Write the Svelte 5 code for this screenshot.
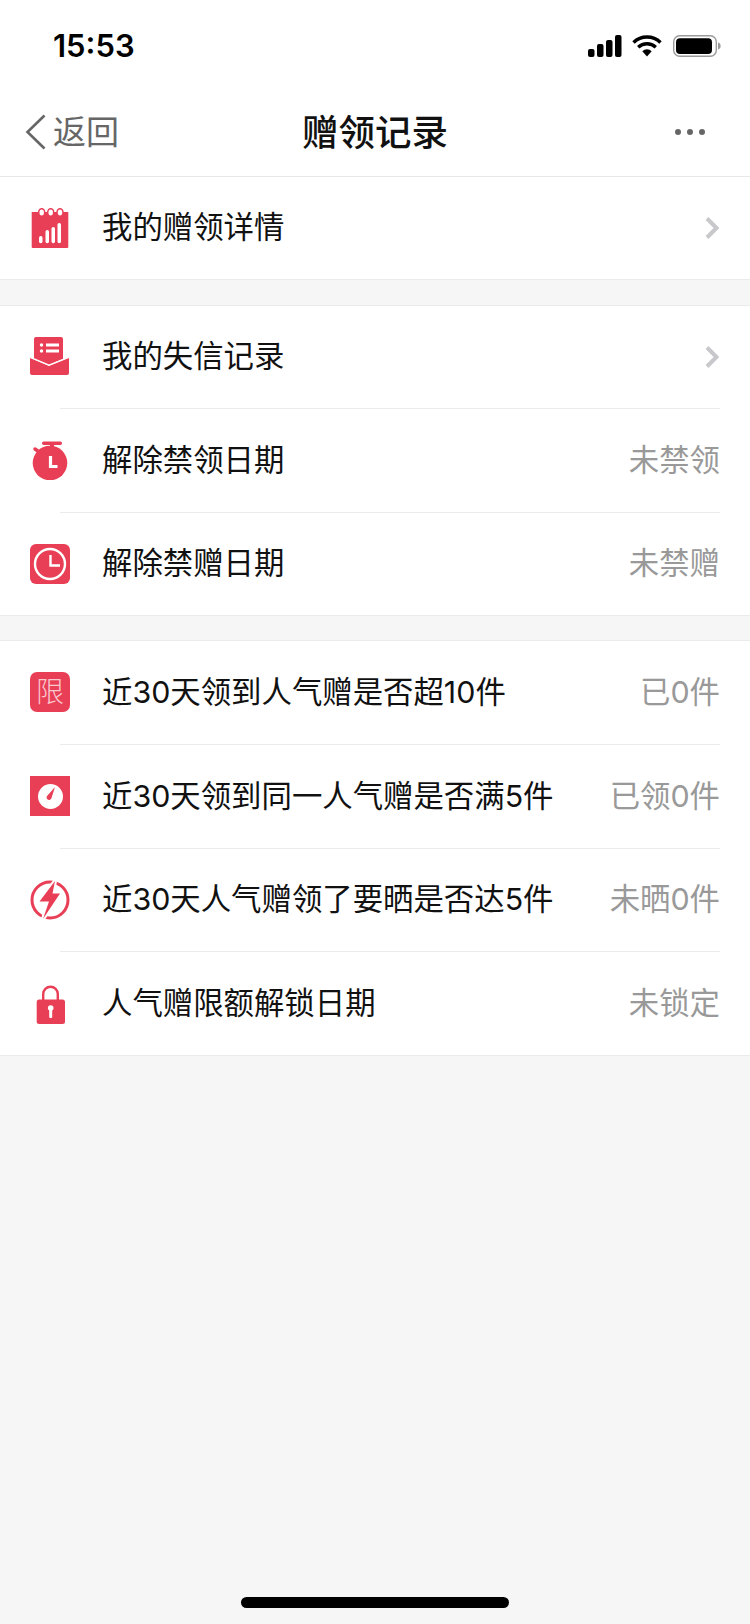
<script>
  const sections = [
    [{ icon: 'calendar', label: '我的赠领详情', arrow: true }],
    [
      { icon: 'inbox', label: '我的失信记录', arrow: true },
      { icon: 'timer', label: '解除禁领日期', value: '未禁领' },
      { icon: 'clock', label: '解除禁赠日期', value: '未禁赠' }
    ],
    [
      { icon: 'limit', label: '近30天领到人气赠是否超10件', value: '已0件' },
      { icon: 'gauge', label: '近30天领到同一人气赠是否满5件', value: '已领0件' },
      { icon: 'bolt', label: '近30天人气赠领了要晒是否达5件', value: '未晒0件' },
      { icon: 'lock', label: '人气赠限额解锁日期', value: '未锁定' }
    ]
  ];
</script>

{#snippet rowIcon(name)}
  <svg class="icon" viewBox="0 0 40 40" width="40" height="40" aria-hidden="true">
    {#if name === 'calendar'}
      <path d="M1.700 4h36.600v35a1 1 0 0 1-1 1H2.700a1 1 0 0 1-1-1z" fill="#e93f56" />
      <g fill="#fff" stroke="#e93f56" stroke-width="1.500">
        <ellipse cx="11.700" cy="4.500" rx="3" ry="3.800" />
        <ellipse cx="20.700" cy="4.500" rx="3" ry="3.800" />
        <ellipse cx="30" cy="4.500" rx="3" ry="3.800" />
      </g>
      <g fill="#fff">
        <rect x="9" y="28" width="3.500" height="7.300" rx="1.700" />
        <rect x="15.500" y="22" width="3.500" height="13.300" rx="1.700" />
        <rect x="21.500" y="19" width="3.500" height="16.300" rx="1.700" />
        <rect x="27.500" y="15" width="3.500" height="20.300" rx="1.700" />
      </g>
    {:else if name === 'inbox'}
      <path d="M4 2a2 2 0 0 1 2-2h25a2 2 0 0 1 2 2v20l-14 6-15-6z" fill="#e93f56" />
      <path d="M0 21l19 8 20-8v15a2 2 0 0 1-2 2H2a2 2 0 0 1-2-2z" fill="#e93f56" />
      <g fill="#fff">
        <circle cx="11.500" cy="8" r="1.700" /><circle cx="11.500" cy="14" r="1.700" />
        <rect x="16" y="6.500" width="13" height="3" /><rect x="16" y="12.500" width="13" height="3" />
      </g>
      <path d="M0 20l19 8 20-8" fill="none" stroke="#fff" stroke-width="1.200" />
    {:else if name === 'timer'}
      <circle cx="20" cy="23" r="17.300" fill="#e93f56" />
      <rect x="12" y="1.500" width="20" height="3.500" rx="1.700" fill="#e93f56" />
      <rect x="20" y="4" width="4" height="4" fill="#e93f56" />
      <path d="M5 9l5 3.500" stroke="#e93f56" stroke-width="3.500" stroke-linecap="round" />
      <path d="M20.500 16v10.500h7" fill="none" stroke="#fff" stroke-width="3.200" />
    {:else if name === 'clock'}
      <rect width="40" height="40" rx="6" fill="#e93f56" />
      <circle cx="20" cy="20" r="15" fill="none" stroke="#fff" stroke-width="2.400" />
      <path d="M20.500 11v10.500h9.500" fill="none" stroke="#fff" stroke-width="2.400" />
    {:else if name === 'limit'}
      <rect width="40" height="40" rx="7" fill="#e93f56" />
      <text x="20" y="30" class="limit-glyph">限</text>
    {:else if name === 'gauge'}
      <rect width="40" height="40" fill="#e93f56" />
      <circle cx="20.500" cy="20.500" r="12.500" fill="#fff" />
      <path d="M25 11l-3.500 11a2.500 2.500 0 1 1-4-2.500z" fill="#e93f56" />
    {:else if name === 'bolt'}
      <circle cx="20" cy="20" r="18" fill="none" stroke="#e93f56" stroke-width="3" />
      <path d="M25 1L9.500 21.500H19L13 39l17-25.500h-7.500z" fill="#e93f56" stroke="#fff" stroke-width="4" paint-order="stroke" />
    {:else if name === 'lock'}
      <path d="M13.200 17v-7a7.300 7.300 0 0 1 14.600 0v7" fill="none" stroke="#e93f56" stroke-width="2.400" />
      <rect x="6.700" y="15.500" width="28.300" height="24.500" rx="2.500" fill="#e93f56" />
      <circle cx="20.700" cy="24" r="2.800" fill="#fff" />
      <rect x="19.200" y="24" width="3" height="10" rx="1" fill="#fff" />
    {/if}
  </svg>
{/snippet}

<div class="page">
  <header class="status">
    <span class="time">15:53</span>
    <div class="status-icons">
      <svg width="34" height="22" viewBox="0 0 34 22" aria-hidden="true">
        <rect x="0" y="14" width="6.500" height="8" rx="2" />
        <rect x="9" y="9" width="6.500" height="13" rx="2" />
        <rect x="18" y="5" width="6.500" height="17" rx="2" />
        <rect x="27" y="0" width="6.500" height="22" rx="2" />
      </svg>
      <svg width="30" height="22" viewBox="0 0 30 22" aria-hidden="true">
        <path d="M1.500 7.500a19.500 19.500 0 0 1 27 0M6.200 12.200a13 13 0 0 1 17.600 0" fill="none" stroke="#000" stroke-width="3.400" />
        <path d="M10.300 16.200a6.800 6.800 0 0 1 9.400 0L15 21.500z" />
      </svg>
      <svg width="48" height="22" viewBox="0 0 48 22" aria-hidden="true">
        <rect x="0.700" y="0.700" width="42.600" height="20.600" rx="6" fill="none" stroke="#9a9a9a" stroke-width="1.400" />
        <rect x="3" y="3.300" width="36" height="15.700" rx="4" />
        <path d="M45 7.500c2 .6 2.600 1.900 2.600 3.500s-.6 2.900-2.600 3.500z" fill="#9a9a9a" />
      </svg>
    </div>
  </header>

  <nav class="nav">
    <div class="back">
      <svg width="22" height="36" viewBox="0 0 22 36" aria-hidden="true">
        <path d="M19.500 1.500L2.500 18l17 16.500" fill="none" stroke="#666" stroke-width="2.600" />
      </svg>
      <span>返回</span>
    </div>
    <h1>赠领记录</h1>
    <div class="more"><i></i><i></i><i></i></div>
  </nav>

  {#each sections as rows}
    <section class="group">
      {#each rows as row}
        <div class="row">
          {@render rowIcon(row.icon)}
          <span class="label">{row.label}</span>
          {#if row.arrow}
            <svg class="chevron" width="15" height="22" viewBox="0 0 15 22" aria-hidden="true">
              <path d="M2 1.500L11.500 11 2 20.500" fill="none" stroke="#c8c8cc" stroke-width="4" />
            </svg>
          {:else}
            <span class="value">{row.value}</span>
          {/if}
        </div>
      {/each}
    </section>
  {/each}

  <div class="home-bar"></div>
</div>

<style>
  :global(body) {
    margin: 0;
    background: #f6f6f6;
  }

  .page {
    position: relative;
    height: 1624px;
    overflow: hidden;
    background: #f6f6f6;
    color: #111;
    font-family: Inter, "Noto Sans CJK SC", "Liberation Sans", sans-serif;
  }

  .status {
    height: 88px;
    box-sizing: border-box;
    padding: 26px 29px 0 53px;
    display: flex;
    justify-content: space-between;
    align-items: flex-start;
    background: #fff;
  }

  .time {
    font-size: 31px;
    font-weight: 600;
    line-height: 40px;
    color: #000;
  }

  .status-icons {
    display: flex;
    gap: 10px;
    padding-top: 9px;
  }

  .status-icons svg {
    display: block;
  }

  .status-icons svg:last-child {
    margin-left: 1px;
  }

  .nav {
    height: 89px;
    box-sizing: border-box;
    padding: 0 45px 0 25px;
    display: flex;
    align-items: center;
    justify-content: space-between;
    position: relative;
    background: #fff;
    border-bottom: 1px solid #e8e8e8;
  }

  .back {
    display: flex;
    align-items: center;
    gap: 6px;
    font-size: 33px;
    color: #666;
  }

  .back svg {
    display: block;
  }

  .back span {
    padding-bottom: 4px;
  }

  h1 {
    position: absolute;
    left: 0;
    right: 0;
    margin: 0;
    padding-bottom: 4px;
    text-align: center;
    font-size: 36.5px;
    font-weight: 500;
    color: #111;
    pointer-events: none;
  }

  .more {
    display: flex;
    gap: 6px;
  }

  .more i {
    width: 6px;
    height: 6px;
    border-radius: 50%;
    background: #666;
  }

  .group {
    background: #fff;
    border-bottom: 1px solid #ebebeb;
    margin-bottom: 24px;
  }

  .group:first-of-type {
    margin-bottom: 25px;
  }

  .group + .group {
    border-top: 1px solid #ebebeb;
  }

  /* divider runs from x=60, so the icon hangs left of the row box */
  .row {
    height: 103.5px;
    box-sizing: border-box;
    margin: 0 30px 0 60px;
    display: flex;
    align-items: center;
    justify-content: space-between;
    font-size: 30.4px;
    border-bottom: 1px solid #ebebeb;
  }

  .row:last-child {
    border-bottom: 0;
    height: 102.5px;
  }

  .group:first-of-type .row {
    height: 101.5px;
  }

  .group:nth-of-type(3) .row {
    height: 103.75px;
  }

  .group:nth-of-type(3) .row:last-child {
    height: 102.75px;
  }

  .icon {
    flex: none;
    display: block;
    margin-left: -30px;
    margin-right: 32px;
  }

  .label {
    flex: 1;
    color: #111;
    white-space: nowrap;
    padding-bottom: 5px;
  }

  .value {
    color: #999;
    white-space: nowrap;
    padding-bottom: 5px;
  }

  .chevron {
    display: block;
  }

  .limit-glyph {
    fill: #f9c6cd;
    font-size: 28px;
    font-weight: 300;
    text-anchor: middle;
  }

  .home-bar {
    position: absolute;
    left: 241px;
    bottom: 16px;
    width: 268px;
    height: 11px;
    border-radius: 6px;
    background: #000;
  }
</style>
